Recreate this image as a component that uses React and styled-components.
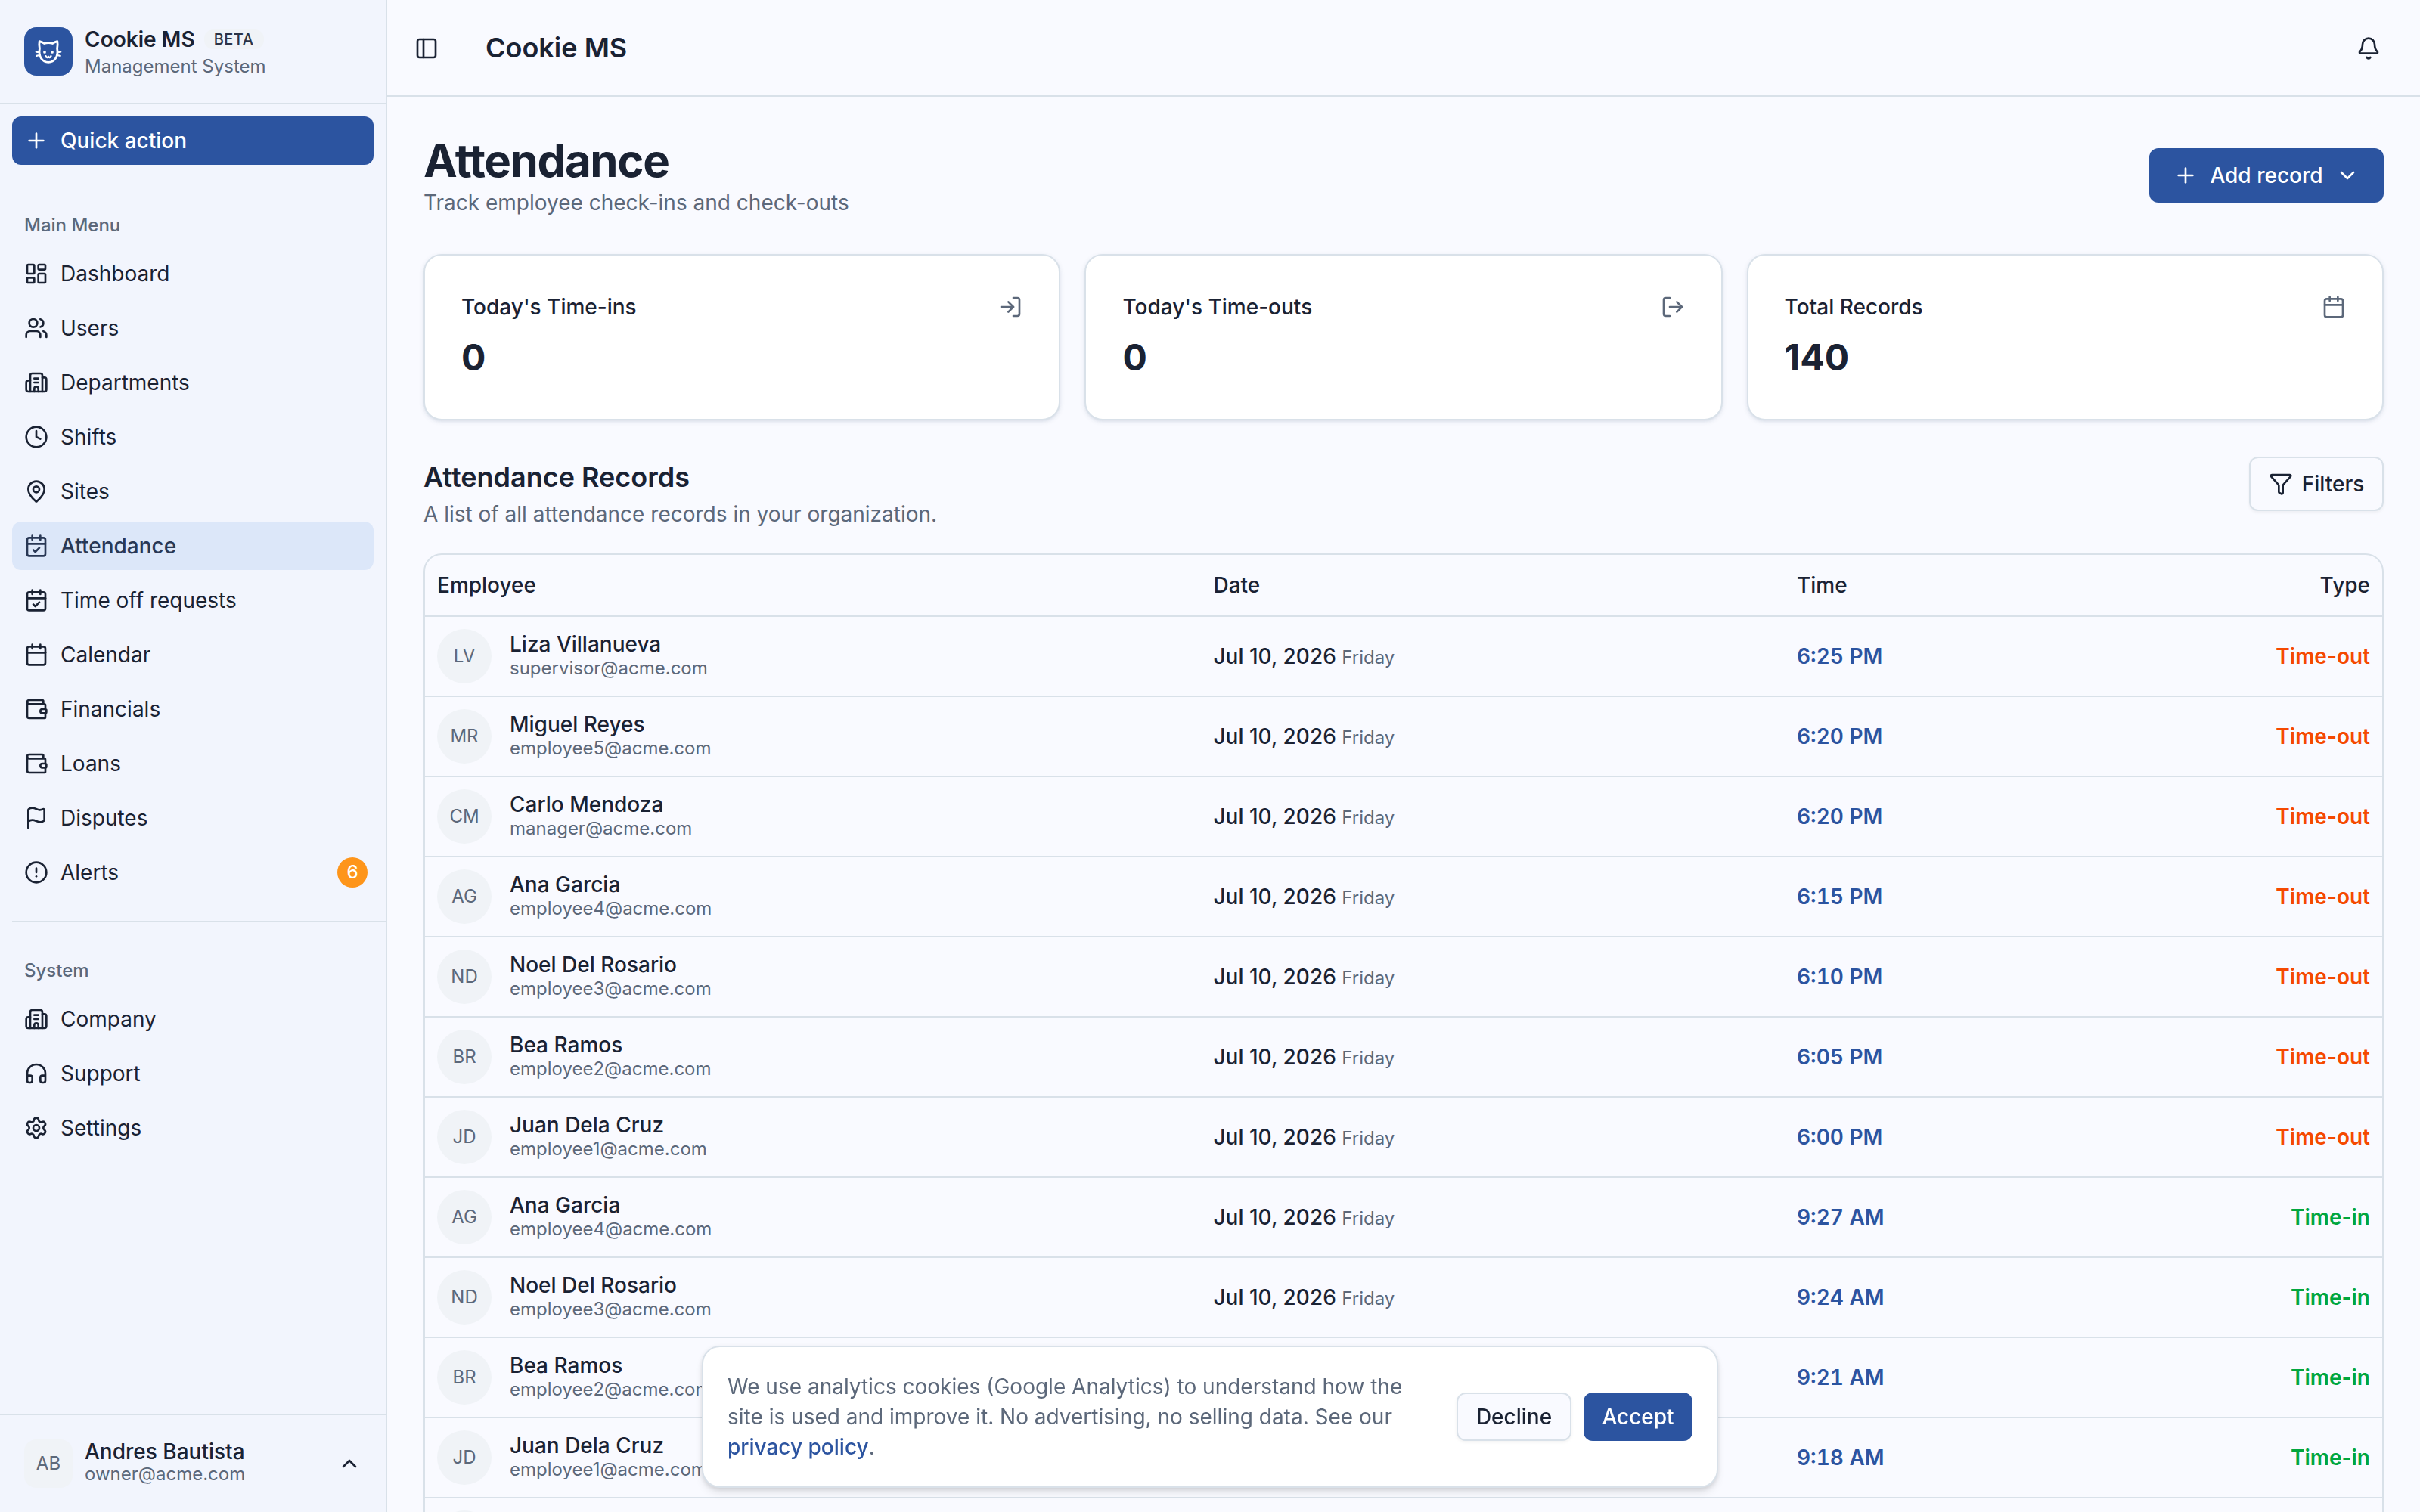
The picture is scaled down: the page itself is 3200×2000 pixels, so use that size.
import React from "react";
import styled, { createGlobalStyle, css } from "styled-components";
import {
  LayoutDashboard, Users, Building2, Clock, MapPin, CalendarCheck, Calendar, Wallet, Flag,
  CircleAlert, Headphones, Settings, Plus, ChevronUp, ChevronDown, PanelLeft, Bell,
  LogIn, LogOut, Funnel,
} from "lucide-react";

const c = {
  bg: "#f9faff",
  side: "#f2f5fd",
  line: "#d9e1e9",
  text: "#1a2233",
  muted: "#5c687a",
  primary: "#2c54a0",
  soft: "#f0f3f7",
};

const Global = createGlobalStyle`
  *, *::before, *::after { box-sizing: border-box; }
  html, body { margin: 0; height: 2000px; overflow: hidden; }
  body {
    background: ${c.bg};
    color: ${c.text};
    font-family: Inter, "Liberation Sans", sans-serif;
    font-size: 28px;
    line-height: 40px;
  }
  h1, h2, p { margin: 0; }
  svg { display: block; flex-shrink: 0; }
`;

const Shell = styled.div`
  display: flex;
  width: 3200px;
  height: 2000px;
  overflow: hidden;
`;

const Sidebar = styled.aside`
  display: flex;
  flex-direction: column;
  width: 512px;
  flex-shrink: 0;
  background: ${c.side};
  border-right: 2px solid ${c.line};
`;

const Brand = styled.div`
  display: flex;
  align-items: center;
  gap: 16px;
  height: 138px;
  padding: 0 32px;
  border-bottom: 2px solid ${c.line};
`;

const Logo = styled.div`
  display: grid;
  place-items: center;
  width: 64px;
  height: 64px;
  border-radius: 16px;
  background: ${c.primary};
  color: #fff;
`;

const Stack = styled.div`
  display: flex;
  flex-direction: column;
  flex: 1;
  min-width: 0;
`;

const AccountText = styled(Stack)`
  padding-bottom: 4px;
`;

const BrandName = styled.div`
  display: flex;
  align-items: center;
  gap: 12px;
  height: 40px;
  font-weight: 600;
`;

const Beta = styled.span`
  padding: 0 14px 0 13px;
  border-radius: 12px;
  background: ${c.soft};
  color: #2b3345;
  font-size: 20px;
  line-height: 26px;
  font-weight: 500;
  letter-spacing: 0.5px;
`;

const Small = styled.span`
  font-size: 24px;
  line-height: 32px;
  color: ${c.muted};
`;

const QuickAction = styled.div`
  display: flex;
  align-items: center;
  gap: 16px;
  height: 64px;
  margin: 16px 16px 48px;
  padding: 0 16px;
  border-radius: 12px;
  background: ${c.primary};
  color: #fff;
  font-weight: 500;
`;

const Group = styled.nav`
  display: flex;
  flex-direction: column;
  gap: 8px;
  padding: 0 16px;
`;

const GroupLabel = styled.div`
  height: 64px;
  margin-bottom: -8px;
  padding: 0 16px;
  font-size: 24px;
  line-height: 64px;
  font-weight: 500;
  color: ${c.muted};
`;

const Item = styled.div`
  display: flex;
  align-items: center;
  gap: 16px;
  height: 64px;
  padding: 0 8px 0 16px;
  border-radius: 12px;
  ${(p) => p.$active && css`
    background: #dce7f9;
    color: #293855;
    font-weight: 500;
  `}
`;

const Count = styled.span`
  display: grid;
  place-items: center;
  width: 40px;
  height: 40px;
  margin-left: auto;
  border-radius: 20px;
  background: #fe951a;
  color: #fff;
  font-size: 24px;
  font-weight: 500;
`;

const Separator = styled.div`
  height: 2px;
  flex-shrink: 0;
  margin: 32px 0 32px 16px;
  background: ${c.line};
`;

const Account = styled.div`
  display: flex;
  align-items: center;
  gap: 16px;
  height: 130px;
  margin-top: auto;
  padding: 0 32px;
  border-top: 2px solid ${c.line};
`;

const Avatar = styled.div`
  display: grid;
  place-items: center;
  flex-shrink: 0;
  width: ${(p) => p.$size}px;
  height: ${(p) => p.$size}px;
  border-radius: ${(p) => p.$radius}px;
  background: ${c.soft};
  color: ${c.muted};
  font-size: 24px;
`;

const Name = styled.span`
  font-weight: 500;
  line-height: ${(p) => p.$lh || 32}px;
`;

const Email = styled(Small)`
  line-height: ${(p) => p.$lh || 32}px;
`;

const Main = styled.main`
  display: flex;
  flex-direction: column;
  flex: 1;
  min-width: 0;
`;

const TopBar = styled.header`
  display: flex;
  align-items: center;
  height: 128px;
  flex-shrink: 0;
  padding: 1px 52px 0 36px;
  border-bottom: 2px solid ${c.line};
`;

const TopTitle = styled.div`
  flex: 1;
  margin-left: 62px;
  padding-bottom: 2px;
  font-size: 36px;
  font-weight: 600;
`;

const Content = styled.div`
  display: flex;
  flex-direction: column;
  padding: 48px;
`;

const HeadRow = styled.div`
  display: flex;
  align-items: ${(p) => p.$align || "center"};
  justify-content: space-between;
`;

const PageTitle = styled.h1`
  font-size: 60px;
  line-height: 72px;
  font-weight: 700;
  letter-spacing: -1.4px;
`;

const Muted = styled.p`
  color: ${c.muted};
`;

const SectionTitle = styled.h2`
  font-size: 36px;
  line-height: 55px;
  padding-bottom: 1px;
  font-weight: 600;
`;

const Button = styled.div`
  display: inline-flex;
  align-items: center;
  justify-content: center;
  flex-shrink: 0;
  gap: ${(p) => p.$gap || 0}px;
  width: ${(p) => p.$w}px;
  height: ${(p) => p.$h}px;
  border-radius: 12px;
  font-weight: 500;
  white-space: nowrap;
  ${(p) => p.$primary
    ? css`
        background: ${c.primary};
        color: #fff;
      `
    : css`
        background: ${c.bg};
        border: 2px solid ${c.line};
        box-shadow: 0 2px 4px rgba(0, 0, 0, 0.05);
      `}
`;

const Cards = styled.div`
  display: grid;
  grid-template-columns: 842.4px 843.2px 842.4px;
  gap: 32px;
  margin: 48px 0;
`;

const Card = styled.div`
  height: 220px;
  padding: 48px;
  border: 2px solid ${c.line};
  border-radius: 24px;
  background: #fff;
  box-shadow: 0 2px 6px rgba(28, 54, 94, 0.1), 0 2px 4px -2px rgba(28, 54, 94, 0.1);
`;

const CardHead = styled.div`
  display: flex;
  align-items: center;
  justify-content: space-between;
  font-weight: 500;
  svg { color: ${c.muted}; }
`;

const CardValue = styled.div`
  margin-top: 15px;
  font-size: 48px;
  line-height: 64px;
  font-weight: 700;
`;

const Table = styled.div`
  margin-top: 32px;
  border: 2px solid ${c.line};
  border-radius: 24px 24px 0 0;
`;

const Row = styled.div`
  display: grid;
  grid-template-columns: 1026.5px 771.5px 1fr 300px;
  align-items: center;
  height: ${(p) => (p.$head ? 82 : 106)}px;
  border-bottom: 2px solid ${c.line};
  font-weight: 500;
`;

const Cell = styled.div`
  padding: 0 16px;
  text-align: ${(p) => (p.$right ? "right" : "left")};
  white-space: nowrap;
`;

const DateCell = styled(Cell)`
  padding-top: 1px;
`;

const Person = styled.div`
  display: flex;
  align-items: center;
  gap: 24px;
  font-weight: 400;
`;

const Day = styled.span`
  font-size: 24px;
  font-weight: 400;
  color: ${c.muted};
`;

const Time = styled.span`
  font-weight: 600;
  font-variant-numeric: tabular-nums;
  color: ${c.primary};
`;

const Kind = styled.span`
  font-weight: 600;
  color: ${(p) => (p.$out ? "#f54900" : "#00a63e")};
`;

const CookieBar = styled.div`
  position: fixed;
  left: 928px;
  top: 1780px;
  display: flex;
  align-items: center;
  gap: 32px;
  width: 1344px;
  height: 188px;
  padding: 0 32px;
  border: 2px solid ${c.line};
  border-radius: 24px;
  background: #fff;
  box-shadow: 0 2px 6px rgba(0, 0, 0, 0.1), 0 8px 12px -2px rgba(0, 0, 0, 0.1);
`;

const CookieText = styled.p`
  flex: 1;
  color: ${c.muted};
`;

const Policy = styled.span`
  color: ${c.primary};
  font-weight: 500;
`;

const Actions = styled.div`
  display: flex;
  gap: 16px;
`;

const CatIcon = () => (
  <svg width="36" height="36" viewBox="0 0 36 36" fill="none" stroke="currentColor" strokeWidth="2.8" strokeLinecap="round" strokeLinejoin="round">
    <path d="M6.2 4.6 C8.5 5.2 11 6.3 12.4 7.5 C16 6.5 20 6.5 23.6 7.5 C25 6.3 27.5 5.2 29.8 4.6 C30.4 8 30.2 11.5 29.6 14 C31.5 25 26 32.3 18 32.3 C10 32.3 4.5 25 6.4 14 C5.8 11.5 5.6 8 6.2 4.6Z" />
    <path d="M1.8 18.5 L5.8 19 M2.3 23.8 L6 23 M34.2 18.5 L30.2 19 M33.7 23.8 L30 23" strokeWidth="2.3" />
    <path d="M14.6 24.3 C15.2 26.5 17.5 26.4 18 24.9 C18.5 26.4 20.8 26.5 21.4 24.3" strokeWidth="2.5" />
    <circle cx="13" cy="18.9" r="1.9" fill="currentColor" stroke="none" />
    <circle cx="23" cy="18.9" r="1.9" fill="currentColor" stroke="none" />
  </svg>
);

const mainMenu = [
  ["Dashboard", LayoutDashboard], ["Users", Users], ["Departments", Building2], ["Shifts", Clock],
  ["Sites", MapPin], ["Attendance", CalendarCheck], ["Time off requests", CalendarCheck],
  ["Calendar", Calendar], ["Financials", Wallet], ["Loans", Wallet], ["Disputes", Flag],
  ["Alerts", CircleAlert, 6],
];

const systemMenu = [["Company", Building2], ["Support", Headphones], ["Settings", Settings]];

const stats = [
  ["Today's Time-ins", "0", LogIn],
  ["Today's Time-outs", "0", LogOut],
  ["Total Records", "140", Calendar],
];

const records = [
  ["LV", "Liza Villanueva", "supervisor", "6:25 PM"],
  ["MR", "Miguel Reyes", "employee5", "6:20 PM"],
  ["CM", "Carlo Mendoza", "manager", "6:20 PM"],
  ["AG", "Ana Garcia", "employee4", "6:15 PM"],
  ["ND", "Noel Del Rosario", "employee3", "6:10 PM"],
  ["BR", "Bea Ramos", "employee2", "6:05 PM"],
  ["JD", "Juan Dela Cruz", "employee1", "6:00 PM"],
  ["AG", "Ana Garcia", "employee4", "9:27 AM"],
  ["ND", "Noel Del Rosario", "employee3", "9:24 AM"],
  ["BR", "Bea Ramos", "employee2", "9:21 AM"],
  ["JD", "Juan Dela Cruz", "employee1", "9:18 AM"],
];

const Menu = ({ items }) =>
  items.map(([label, Icon, count]) => (
    <Item key={label} $active={label === "Attendance"}>
      <Icon size={32} />
      {label}
      {count && <Count>{count}</Count>}
    </Item>
  ));

export default function App() {
  return (
    <>
      <Global />
      <Shell>
        <Sidebar>
          <Brand>
            <Logo><CatIcon /></Logo>
            <Stack>
              <BrandName>Cookie MS <Beta>BETA</Beta></BrandName>
              <Small>Management System</Small>
            </Stack>
          </Brand>
          <QuickAction><Plus size={32} />Quick action</QuickAction>
          <Group>
            <GroupLabel>Main Menu</GroupLabel>
            <Menu items={mainMenu} />
          </Group>
          <Separator />
          <Group>
            <GroupLabel>System</GroupLabel>
            <Menu items={systemMenu} />
          </Group>
          <Account>
            <Avatar $size={64} $radius={16}>AB</Avatar>
            <AccountText>
              <Name $lh={32}>Andres Bautista</Name>
              <Email $lh={28}>owner@acme.com</Email>
            </AccountText>
            <ChevronUp size={32} />
          </Account>
        </Sidebar>
        <Main>
          <TopBar>
            <PanelLeft size={32} />
            <TopTitle>Cookie MS</TopTitle>
            <Bell size={32} />
          </TopBar>
          <Content>
            <HeadRow>
              <div>
                <PageTitle>Attendance</PageTitle>
                <Muted>Track employee check-ins and check-outs</Muted>
              </div>
              <Button $primary $w={310} $h={72} $gap={16}>
                <Plus size={32} />Add record<ChevronDown size={32} />
              </Button>
            </HeadRow>
            <Cards>
              {stats.map(([title, value, Icon]) => (
                <Card key={title}>
                  <CardHead>{title}<Icon size={32} /></CardHead>
                  <CardValue>{value}</CardValue>
                </Card>
              ))}
            </Cards>
            <HeadRow $align="flex-start">
              <div>
                <SectionTitle>Attendance Records</SectionTitle>
                <Muted>A list of all attendance records in your organization.</Muted>
              </div>
              <Button $w={178} $h={72} $gap={12}><Funnel size={32} />Filters</Button>
            </HeadRow>
            <Table>
              <Row $head>
                <Cell>Employee</Cell>
                <Cell>Date</Cell>
                <Cell>Time</Cell>
                <Cell $right>Type</Cell>
              </Row>
              {records.map(([initials, name, mail, time], i) => (
                <Row key={i}>
                  <Cell>
                    <Person>
                      <Avatar $size={72} $radius={36}>{initials}</Avatar>
                      <Stack>
                        <Name>{name}</Name>
                        <Email>{mail}@acme.com</Email>
                      </Stack>
                    </Person>
                  </Cell>
                  <DateCell>Jul 10, 2026 <Day>Friday</Day></DateCell>
                  <Cell><Time>{time}</Time></Cell>
                  <Cell $right>
                    <Kind $out={time.endsWith("PM")}>{time.endsWith("PM") ? "Time-out" : "Time-in"}</Kind>
                  </Cell>
                </Row>
              ))}
              <Row>
                <Cell><Person><Avatar $size={72} $radius={36} /></Person></Cell>
              </Row>
            </Table>
          </Content>
        </Main>
      </Shell>
      <CookieBar>
        <CookieText>
          We use analytics cookies (Google Analytics) to understand how the site is used and improve it. No
          advertising, no selling data. See our <Policy>privacy policy</Policy>.
        </CookieText>
        <Actions>
          <Button $w={152} $h={64}>Decline</Button>
          <Button $primary $w={144} $h={64}>Accept</Button>
        </Actions>
      </CookieBar>
    </>
  );
}
